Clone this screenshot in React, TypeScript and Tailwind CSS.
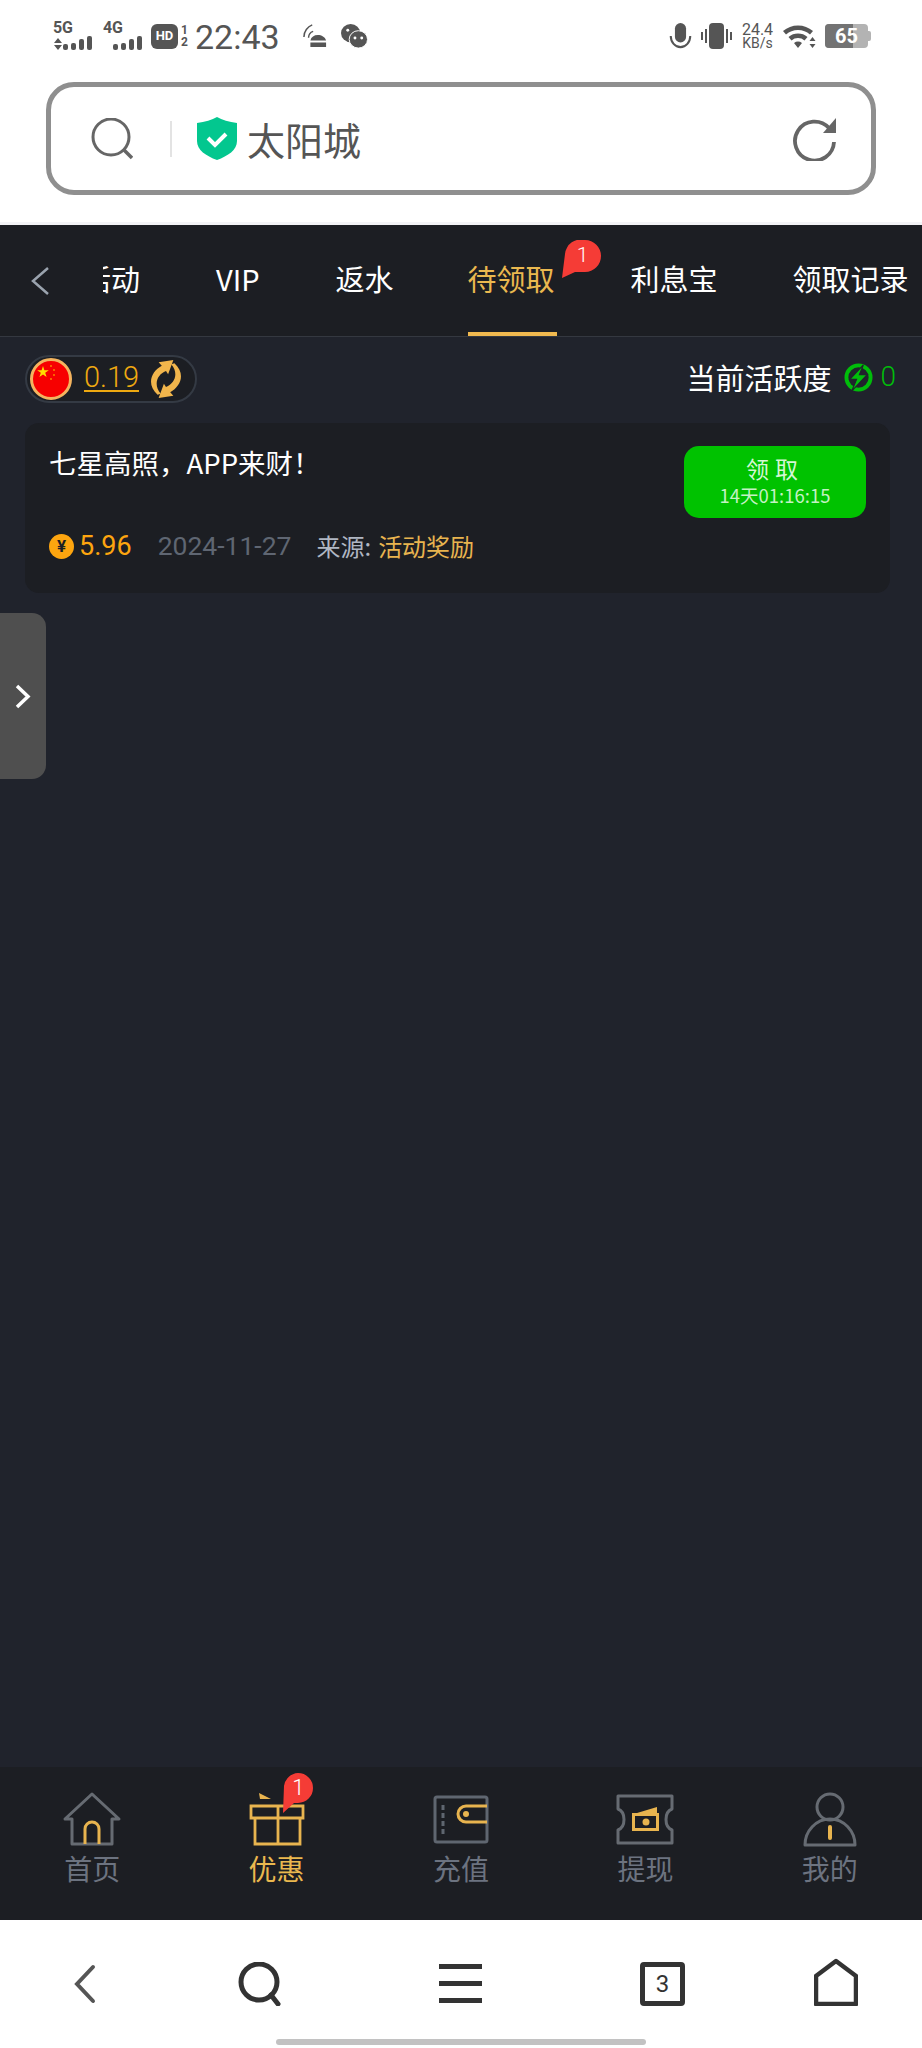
const cjk = '"Noto Sans CJK SC", "Noto Sans", sans-serif';

function Signal({ label, arrows }: { label: string; arrows?: boolean }) {
  const bars = [6, 7, 11, 14];
  return (
    <div className="w-[41px] h-[28px] relative">
      <span className="absolute left-0 top-[-2px] text-[16px] leading-[16px] font-bold tracking-[-0.3px]">{label}</span>
      {arrows && (
        <svg viewBox="0 0 8 12" className="absolute left-[1px] bottom-[0px] w-[8px] h-[12px]" fill="#555">
          <path d="M4 0l4 5H0zM4 12l4-5H0z" />
        </svg>
      )}
      <div className="absolute left-[10px] bottom-[0px] flex items-end gap-[3px]">
        {bars.map((b, i) => <i key={i} className="block w-[5px] bg-[#555] rounded-[2px]" style={{ height: b }} />)}
      </div>
    </div>
  );
}

function StatusBar() {
  return (
    <div className="h-[82px] flex items-start justify-between pl-[53px] pr-[51px] pt-[21px] text-[#555] font-['Roboto']">
      <div className="flex items-center h-[30px]">
        <Signal label="5G" arrows />
        <div className="ml-[9px]"><Signal label="4G" /></div>
        <div className="ml-[7px] w-[27px] h-[25px] rounded-[6px] bg-[#555] text-white text-[13px] font-bold flex items-center justify-center">HD</div>
        <div className="ml-[2px] w-[9px] text-[12px] leading-[12px] font-bold text-center">1<br />2</div>
        <span className="ml-[6px] mt-[2px] text-[34px] leading-none">22:43</span>
        <svg viewBox="0 0 28 26" className="ml-[22px] w-[26px] h-[24px]" fill="none">
          <path d="M2 14C2 8 6 3 11 1M7 15c0-3 2-6 5-7" stroke="#555" strokeWidth="1.600" />
          <path d="M9 18c1-4 4-6 8-6s8 2 9 6zM9 20h17v5H9z" fill="#555" />
        </svg>
        <svg viewBox="0 0 28 26" className="ml-[13px] w-[27px] h-[26px]">
          <ellipse cx="10" cy="10" rx="10" ry="9.500" fill="#555" />
          <ellipse cx="18" cy="16.500" rx="9.500" ry="9" fill="#555" stroke="#fff" strokeWidth="1" />
          <circle cx="7" cy="7" r="1.500" fill="#fff" />
          <circle cx="14.500" cy="15" r="1.500" fill="#fff" />
          <circle cx="21.500" cy="15" r="1.500" fill="#fff" />
        </svg>
      </div>
      <div className="flex items-center h-[30px]">
        <svg viewBox="0 0 24 28" className="w-[23px] h-[26px]" fill="none">
          <rect x="6" y="0" width="12" height="21" rx="6" fill="#555" />
          <path d="M1.500 14a10.500 12 0 0 0 21 0" stroke="#555" strokeWidth="2.200" />
        </svg>
        <svg viewBox="0 0 31 26" className="ml-[9px] w-[31px] h-[26px]" fill="#555">
          <rect x="8" y="0" width="15" height="26" rx="4" />
          <rect x="4" y="6" width="2" height="14" />
          <rect x="0" y="9" width="2" height="8" />
          <rect x="25" y="6" width="2" height="14" />
          <rect x="29" y="9" width="2" height="8" />
        </svg>
        <div className="ml-[9px] w-[33px] text-center whitespace-nowrap flex flex-col items-center">
          <div className="text-[16px] leading-[14px]">24.4</div>
          <div className="text-[14px] leading-[12px]">KB/s</div>
        </div>
        <svg viewBox="0 0 33 24" className="ml-[9px] w-[33px] h-[24px]" fill="#555">
          <path d="M0 7a23 23 0 0 1 30 0l-3 3.500a18 18 0 0 0-24 0zM5.500 13a15 15 0 0 1 19 0l-3 3.500a10 10 0 0 0-13 0zM11 19a7 7 0 0 1 8 0l-4 5z" />
          <path d="M29.500 13l3 4h-6zM29.500 24l3-4h-6z" />
        </svg>
        <div className="ml-[9px] relative w-[43px] h-[24px] rounded-[4px] bg-[#b3b3b3] overflow-hidden">
          <div className="absolute inset-y-0 left-0 w-[28px] bg-[#737373]" />
          <span className="absolute inset-0 flex items-center justify-center text-white text-[20px] leading-none font-bold">65</span>
        </div>
        <div className="w-[3px] h-[10px] bg-[#b3b3b3] rounded-r-[2px]" />
      </div>
    </div>
  );
}

function AddressBar() {
  return (
    <div className="h-[143px] px-[46px] border-b-[3px] border-[#f3f3f6]">
      <div className="h-[113px] border-[5px] border-[#8f8f8f] rounded-[28px] flex items-center pl-[40px] pr-[34px]">
        <svg viewBox="0 0 42 42" className="w-[42px] h-[42px]" fill="none" stroke="#666" strokeWidth="3">
          <circle cx="20" cy="19" r="18" />
          <path d="M33 32l8 8" strokeWidth="3.500" />
        </svg>
        <div className="ml-[37px] w-[2px] h-[36px] bg-[#e3e3e3]" />
        <svg viewBox="0 0 40 43" className="ml-[25px] w-[40px] h-[43px]">
          <path d="M20 0c5 3 12 5 20 6v18c0 9-9 15-20 19C9 39 0 33 0 24V6c8-1 15-3 20-6z" fill="#03c78f" />
          <path d="M11 21l7 7 11-11" fill="none" stroke="#fff" strokeWidth="4" />
        </svg>
        <span className="ml-[10px] text-[38px] leading-none text-[#555]" style={{ fontFamily: cjk }}>太阳城</span>
        <div className="flex-1" />
        <svg viewBox="0 0 44 44" className="w-[44px] h-[44px]" fill="none">
          <path d="M36 11A19.500 19.500 0 1 0 41 25" stroke="#666" strokeWidth="3.800" />
          <path d="M43 1V16H30z" fill="#666" />
        </svg>
      </div>
    </div>
  );
}

function TabBubble() {
  return (
    <div className="absolute left-[94px] top-[-20px] w-[39px] h-[38px] flex justify-center">
      <svg viewBox="0 0 39 38" className="absolute inset-0 w-full h-full">
        <path d="M23 0a16 16 0 0 1 0 32H13L0 38 3 14A16 16 0 0 1 23 0z" fill="#f53c36" />
      </svg>
      <span className="relative text-white text-[21px] leading-[30px] ml-[3px] font-['Roboto'] font-light">1</span>
    </div>
  );
}

function Tabs() {
  return (
    <div className="h-[112px] bg-[#1c1e23] border-b border-[#343840] relative overflow-hidden text-[29px] text-white" style={{ fontFamily: cjk }}>
      <svg viewBox="0 0 19 28" className="absolute left-[30px] top-[42px] w-[19px] h-[28px]" fill="none" stroke="#9aa3ae" strokeWidth="2.500">
        <path d="M18 1L3 14l15 13" />
      </svg>
      <div className="flex items-start pl-[103px] pt-[35px] leading-[36px] whitespace-nowrap">
        <div className="w-[37px] overflow-hidden flex justify-end"><span>活动</span></div>
        <span className="ml-[76px]">VIP</span>
        <span className="ml-[76px]">返水</span>
        <div className="ml-[74px] relative text-[#eab84f]">
          待领取
          <TabBubble />
        </div>
        <span className="ml-[76px]">利息宝</span>
        <span className="ml-[75px]">领取记录</span>
      </div>
      <div className="absolute left-[468px] bottom-0 w-[89px] h-[4px] bg-[#f0b94f]" />
    </div>
  );
}

function Wallet() {
  return (
    <div className="h-[84px] mb-[2px] flex items-center justify-between pl-[25px] pr-[26px]">
      <div className="w-[172px] h-[48px] rounded-full bg-[#1c1e23] border-2 border-[#343a44] flex items-center pl-[3px]">
        <div className="w-[42px] h-[42px] shrink-0 rounded-full bg-[#f70000] border-[3px] border-[#f4b45f] overflow-hidden">
          <svg viewBox="0 0 36 36" className="w-full h-full" fill="#ffdd00">
            <path d="M10 5l1.400 4.200 4.400 0-3.600 2.600 1.400 4.200-3.600-2.600-3.600 2.600 1.400-4.200-3.600-2.600 4.400 0z" />
            <circle cx="18" cy="5" r=".8" /><circle cx="21" cy="9" r=".8" /><circle cx="21" cy="14" r=".8" /><circle cx="18" cy="18" r=".8" />
          </svg>
        </div>
        <span className="ml-[12px] -mt-[2px] text-[#eea911] text-[29px] leading-[26px] border-b-2 border-[#eea911] font-['Roboto'] font-light">0.19</span>
        <svg viewBox="0 0 36 38" className="ml-[8px] w-[38px] h-[40px]" fill="#f2b64c">
          <path d="M25 1L11 3l3 3.500C4 12-1 24 10 34l3-1C6 25 9 15 18 11.500l2 3z" />
          <path d="M25 1L11 3l3 3.500C4 12-1 24 10 34l3-1C6 25 9 15 18 11.500l2 3z" transform="rotate(180 18 19)" />
        </svg>
      </div>
      <div className="flex items-center -mt-[4px]">
        <span className="text-white text-[29px] leading-none" style={{ fontFamily: cjk }}>当前活跃度</span>
        <svg viewBox="0 0 30 30" className="ml-[13px] w-[29px] h-[29px]">
          <circle cx="15" cy="15" r="12.500" fill="none" stroke="#00bd0a" strokeWidth="4" />
          <path d="M20 2L6 17h7L8 29l16-17h-8z" fill="#00bd0a" stroke="#20232c" strokeWidth="1.200" />
        </svg>
        <span className="ml-[7px] text-[#00bd0a] text-[28px] leading-none font-['Roboto'] font-light">0</span>
      </div>
    </div>
  );
}

function Card() {
  return (
    <div className="ml-[25px] mr-[32px] h-[170px] rounded-[14px] bg-[#1c1e23] pl-[24px] pr-[24px] pt-[21px]" style={{ fontFamily: cjk }}>
      <div className="flex justify-between items-start">
        <span className="text-white text-[27.500px] leading-[36px]">七星高照，APP来财！</span>
        <div className="w-[182px] h-[72px] mt-[2px] rounded-[15px] bg-[#00c200] flex flex-col items-center pt-[7px]">
          <span className="text-[23px] leading-[30px] tracking-[6px] text-[#d4f7d4]">领取</span>
          <span className="text-[18.500px] leading-[24px] text-[#c4f2c4]">14天01:16:15</span>
        </div>
      </div>
      <div className="flex items-center mt-[10px] leading-[36px]">
        <div className="w-[25px] h-[25px] rounded-full bg-[#fda50f] flex items-center justify-center text-[#1c1e23] text-[17px] font-bold font-['Roboto']">¥</div>
        <span className="ml-[5px] text-[#fda50f] text-[27px] font-['Roboto']">5.96</span>
        <span className="ml-[26px] text-[#5f6672] text-[26.500px] font-['Roboto']">2024-11-27</span>
        <span className="ml-[25px] text-[#b0b7c3] text-[24px]">来源:</span>
        <span className="ml-[7px] text-[#e8b44f] text-[24px]">活动奖励</span>
      </div>
    </div>
  );
}

function Nav() {
  return (
    <div className="h-[153px] bg-[#1c1e23] grid grid-cols-5 text-[28px] text-[#6c7380]" style={{ fontFamily: cjk }}>
      <div className="flex flex-col items-center pt-[24px]">
        <svg viewBox="0 0 60 56" className="w-[60px] h-[56px]" fill="none" stroke="#666b72" strokeWidth="3">
          <path d="M10 28H3L30 3l27 25h-7v25H10z" strokeLinejoin="round" />
          <path d="M23 53V38a7 7 0 0 1 14 0v15" stroke="#e8b44f" />
        </svg>
        <span className="leading-[38px] mt-[2px]">首页</span>
      </div>
      <div className="flex flex-col items-center pt-[24px] relative text-[#eab84f]">
        <svg viewBox="0 0 60 56" className="w-[60px] h-[56px]" fill="none" stroke="#e8b44f" strokeWidth="2.800">
          <path d="M4 15h52v12H4zM8 27h45v26H8zM31 15v38" />
          <path d="M12 2l12 6H13z" fill="#e8b44f" stroke="none" />
        </svg>
        <span className="leading-[38px] mt-[2px]">优惠</span>
        <div className="absolute left-[99px] top-[6px] w-[30px] h-[40px] flex justify-center">
          <svg viewBox="0 0 30 40" className="absolute inset-0 w-full h-full">
            <path d="M15 0a15 15 0 0 1 0 30H11L0 40 1 13A15 15 0 0 1 15 0z" fill="#f53c36" />
          </svg>
          <span className="relative text-white text-[22px] leading-[29px] font-['Roboto'] font-light">1</span>
        </div>
      </div>
      <div className="flex flex-col items-center pt-[24px]">
        <svg viewBox="0 0 56 56" className="w-[56px] h-[56px]" fill="none" stroke="#5f6670" strokeWidth="3">
          <rect x="2" y="6" width="52" height="45" rx="2" />
          <path d="M10 14v5M10 22v5M10 30v5M10 38v5" />
          <path d="M54 15H33a8 8 0 0 0 0 16h21" stroke="#e8b44f" />
          <circle cx="33" cy="23" r="3" fill="#e8b44f" stroke="none" />
        </svg>
        <span className="leading-[38px] mt-[2px]">充值</span>
      </div>
      <div className="flex flex-col items-center pt-[24px]">
        <svg viewBox="0 0 60 56" className="w-[60px] h-[56px]" fill="none" stroke="#666b72" strokeWidth="3">
          <path d="M3 5h54v13c-8 3-8 18 0 21v13H3V39c8-3 8-18 0-21z" strokeLinejoin="round" />
          <path d="M17 22h27v18H17z" fill="#e8b44f" stroke="none" />
          <path d="M22 22l20-6v6z" fill="#e8b44f" stroke="none" />
          <rect x="20" y="25" width="21" height="12" fill="#1c1e23" stroke="none" />
          <circle cx="31" cy="31" r="3.500" fill="#e8b44f" stroke="none" />
        </svg>
        <span className="leading-[38px] mt-[2px]">提现</span>
      </div>
      <div className="flex flex-col items-center pt-[24px]">
        <svg viewBox="0 0 56 56" className="w-[56px] h-[56px]" fill="none" stroke="#666b72" strokeWidth="3">
          <circle cx="28" cy="16" r="13" />
          <path d="M3 54c0-14 11-26 25-26s25 12 25 26z" strokeLinejoin="round" />
          <path d="M28 36v11" stroke="#e8b44f" strokeWidth="4" strokeLinecap="round" />
        </svg>
        <span className="leading-[38px] mt-[2px]">我的</span>
      </div>
    </div>
  );
}

function BrowserBar() {
  return (
    <div className="h-[128px] bg-white relative">
      <div className="flex items-start pl-[73px] pt-[42px]">
        <svg viewBox="0 0 23 40" className="mt-[2px] w-[23px] h-[40px]" fill="none" stroke="#555" strokeWidth="4" strokeLinecap="round">
          <path d="M20 3L4 20l16 17" />
        </svg>
        <svg viewBox="0 0 44 44" className="ml-[142px] w-[44px] h-[44px]" fill="none" stroke="#333" strokeWidth="5">
          <circle cx="21" cy="20" r="18" />
          <path d="M33 33l7 9" strokeLinecap="round" />
        </svg>
        <div className="ml-[157px] mt-[2px] flex flex-col gap-[12px]">
          <div className="w-[43px] h-[5px] bg-[#333]" />
          <div className="w-[43px] h-[5px] bg-[#333]" />
          <div className="w-[43px] h-[5px] bg-[#333]" />
        </div>
        <div className="ml-[158px] w-[45px] h-[44px] border-[5px] border-[#333] rounded-[4px] flex items-center justify-center text-[#333] text-[24px] font-['Roboto'] leading-none">3</div>
        <svg viewBox="0 0 44 48" className="ml-[129px] -mt-[4px] w-[44px] h-[48px]" fill="none" stroke="#333" strokeWidth="4.500" strokeLinejoin="round">
          <path d="M22 3L42 18v28H2V18z" />
        </svg>
      </div>
      <div className="absolute left-[276px] top-[119px] w-[370px] h-[6px] rounded-full bg-[#c2c2c2]" />
    </div>
  );
}

export default function App() {
  return (
    <div className="w-[922px] h-[2048px] bg-white flex flex-col overflow-hidden font-['Roboto']">
      <StatusBar />
      <AddressBar />
      <Tabs />
      <div className="flex-1 bg-[#20232c] relative">
        <Wallet />
        <Card />
        <div className="absolute left-0 top-[276px] w-[46px] h-[166px] rounded-r-[14px] bg-[#4f4f4f] flex items-center justify-center">
          <svg viewBox="0 0 16 25" className="w-[16px] h-[25px]" fill="none" stroke="#fff" strokeWidth="3.500">
            <path d="M2 2l11 10.500L2 23" />
          </svg>
        </div>
      </div>
      <Nav />
      <BrowserBar />
    </div>
  );
}
